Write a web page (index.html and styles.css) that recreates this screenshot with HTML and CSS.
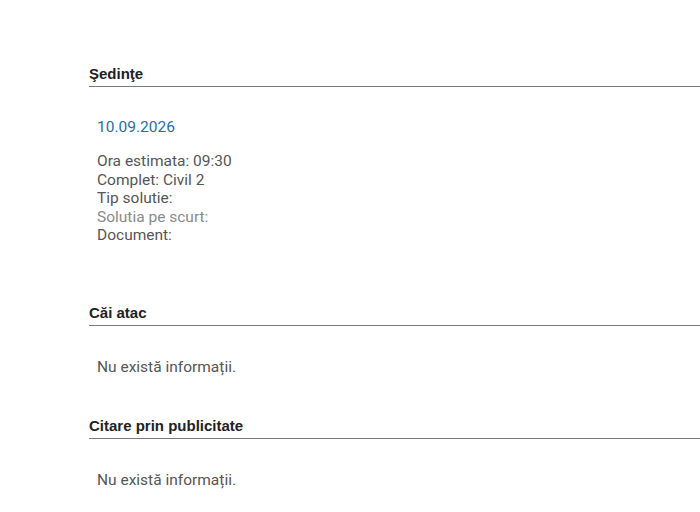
FILE: index.html
```html
<!DOCTYPE html>
<html lang="ro">
<head>
<meta charset="utf-8">
<link rel="stylesheet" href="styles.css">
</head>
<body>
<div class="page">
  <section class="block block-first">
    <h2 class="title">Şedinţe</h2>
    <div class="content">
      <div class="date">10.09.2026</div>
      <div class="details">
        <div>Ora estimata: 09:30</div>
        <div>Complet: Civil 2</div>
        <div>Tip solutie:</div>
        <div class="muted">Solutia pe scurt:</div>
        <div>Document:</div>
      </div>
    </div>
  </section>
  <section class="block block-second">
    <h2 class="title">Căi atac</h2>
    <div class="content"><p class="empty">Nu există informații.</p></div>
  </section>
  <section class="block block-third">
    <h2 class="title">Citare prin publicitate</h2>
    <div class="content"><p class="empty">Nu există informații.</p></div>
  </section>
</div>
</body>
</html>
```
FILE: styles.css
```css
html, body { margin: 0; padding: 0; background: #fff; }
body { font-family: Roboto, "Open Sans", sans-serif; color: #555; overflow: hidden; }
.page { padding: 65px 0 0 89px; }
.title {
  margin: 0;
  font-family: "Liberation Sans", Arial, sans-serif;
  font-weight: bold;
  font-size: 15px;
  line-height: 17px;
  color: #222;
  padding-bottom: 4px;
  border-bottom: 1px solid #7a7a7a;
}
.content { padding: 0 0 0 8px; font-size: 15.5px; line-height: 18.5px; }
.date { color: #1f6fa3; margin-top: 31px; }
.details { margin-top: 15.5px; }
.muted { color: #8a8a8a; }
.empty { margin: 0; padding: 32px 0 0; }
.block-second { margin-top: 59.5px; }
.block-third { margin-top: 40.5px; }
```
